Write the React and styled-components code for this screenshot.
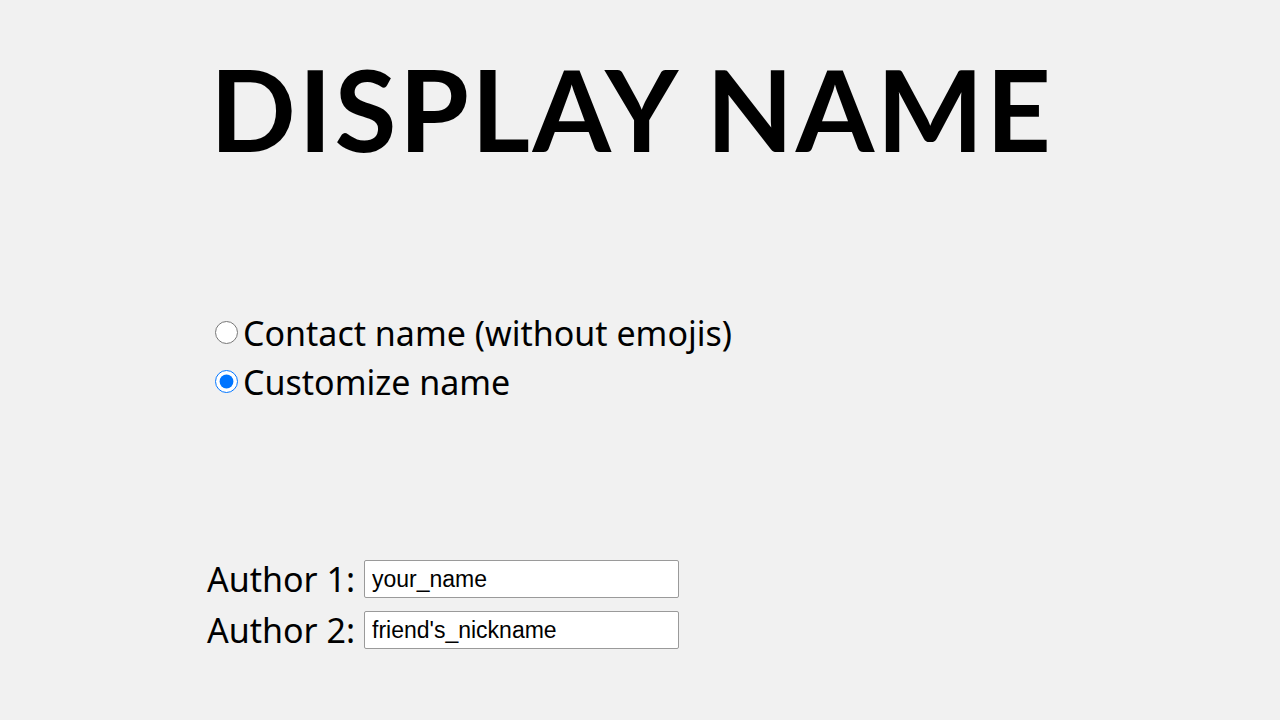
import React from "react";
import styled, { createGlobalStyle } from "styled-components";

const Global = createGlobalStyle`
  html, body { margin: 0; padding: 0; background: #f1f1f1; }
  body { font-family: "Noto Sans", sans-serif; color: #000; }
`;

const Page = styled.main`
  width: 1280px;
  height: 720px;
  box-sizing: border-box;
  padding: 0 0 0 207px;
  display: flex;
  flex-direction: column;
`;

const Title = styled.h1`
  margin: 38px 0 0 3px;
  font-family: "Lato", sans-serif;
  font-weight: 700;
  font-size: 113px;
  line-height: 140px;
  letter-spacing: 2.5px;
  white-space: nowrap;
`;

const Options = styled.div`
  margin: 130px 0 0 8px;
  display: flex;
  flex-direction: column;
`;

const OptionRow = styled.label`
  display: flex;
  align-items: center;
  gap: 5px;
  height: 49px;
  font-size: 34px;
  font-family: "Noto Sans", sans-serif;
`;

const Radio = styled.input`
  width: 23px;
  height: 23px;
  margin: 0;
`;

const Authors = styled.div`
  margin: 154px 0 0 0;
  display: flex;
  flex-direction: column;
  gap: 13px;
`;

const AuthorRow = styled.div`
  display: flex;
  align-items: center;
  gap: 9px;
  height: 38px;
`;

const AuthorLabel = styled.label`
  font-size: 34px;
  line-height: 38px;
  font-family: "Noto Sans", sans-serif;
  width: 148px;
  white-space: nowrap;
`;

const NameInput = styled.input`
  box-sizing: border-box;
  width: 315px;
  height: 38px;
  padding: 0 7px;
  border: 1px solid #9a9a9a;
  border-radius: 2px;
  background: #fff;
  font-family: "Liberation Sans", Arial, sans-serif;
  font-size: 23px;
  color: #000;
`;

export default function App() {
  return (
    <>
      <Global />
      <Page>
        <Title>DISPLAY NAME</Title>
        <Options>
          <OptionRow>
            <Radio type="radio" name="mode" />
            Contact name (without emojis)
          </OptionRow>
          <OptionRow>
            <Radio type="radio" name="mode" defaultChecked />
            Customize name
          </OptionRow>
        </Options>
        <Authors>
          <AuthorRow>
            <AuthorLabel>Author 1:</AuthorLabel>
            <NameInput defaultValue="your_name" />
          </AuthorRow>
          <AuthorRow>
            <AuthorLabel>Author 2:</AuthorLabel>
            <NameInput defaultValue="friend's_nickname" />
          </AuthorRow>
        </Authors>
      </Page>
    </>
  );
}
